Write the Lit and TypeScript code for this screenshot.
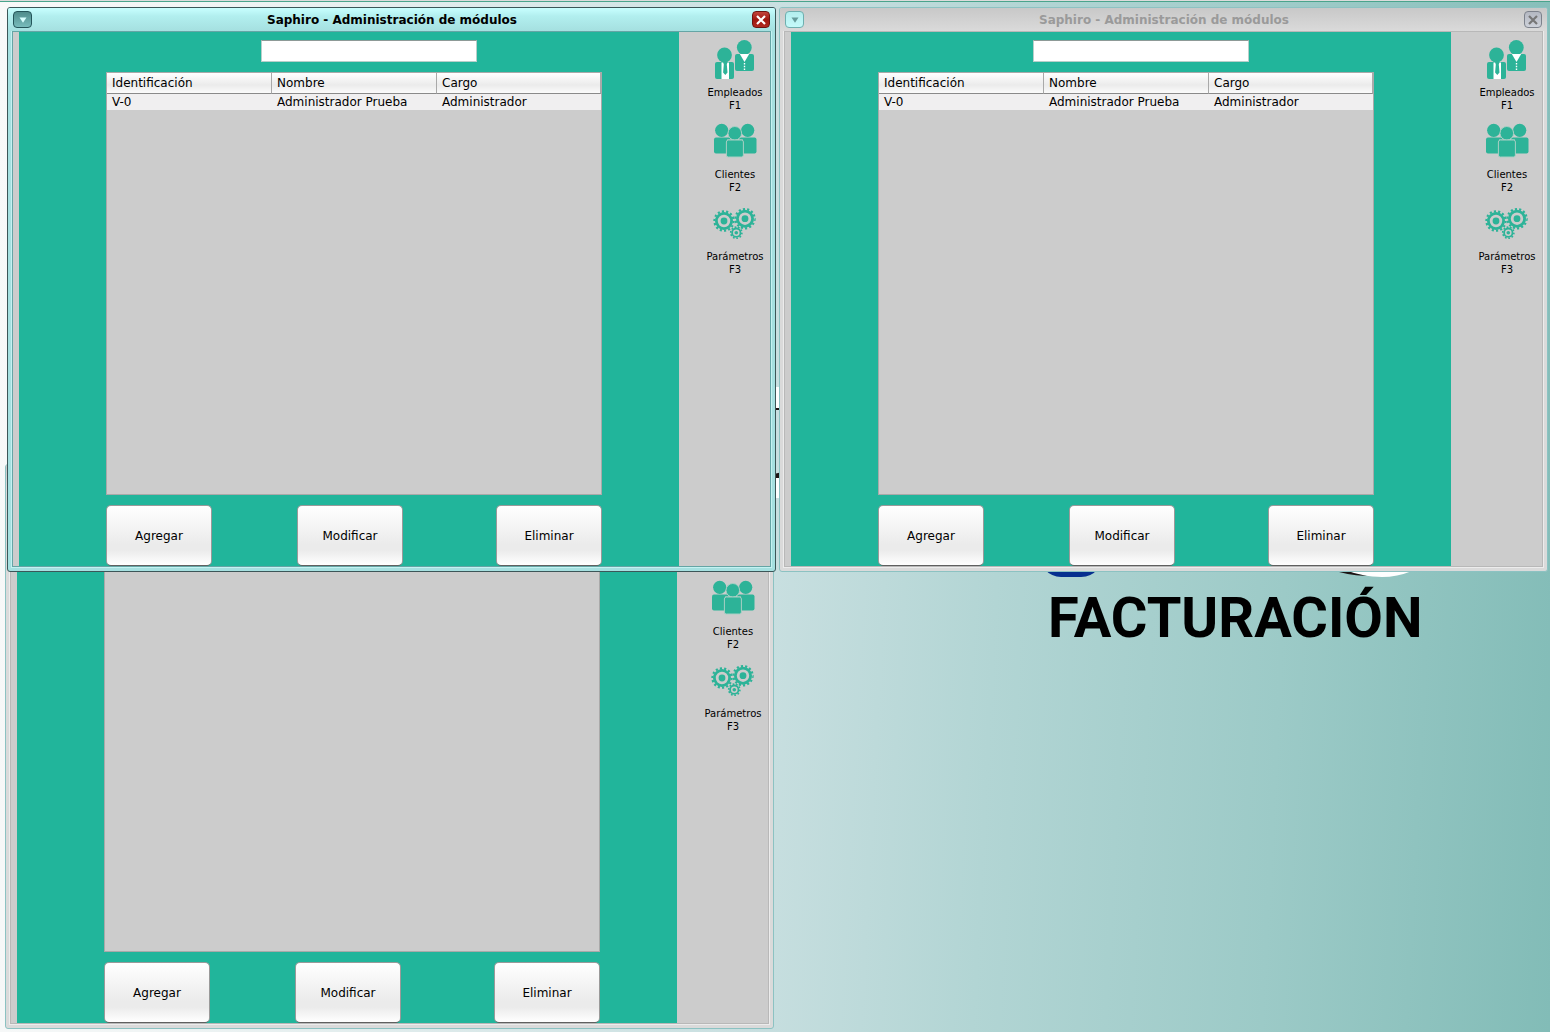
import { LitElement, html, css, svg, nothing } from "lit";
import { customElement, property } from "lit/decorators.js";
import { styleMap } from "lit/directives/style-map.js";

const bigGear = (cx: number, cy: number) => svg`
  <circle cx=${cx} cy=${cy} r="9.6" fill="none" stroke-width="2.2" pathLength="28" stroke-dasharray="1 1"></circle>
  <circle cx=${cx} cy=${cy} r="7.6" fill="none" stroke-width="2.8"></circle>
  <circle cx=${cx} cy=${cy} r="3.4" stroke="none"></circle>`;

const smallGear = (cx: number, cy: number) => svg`
  <circle cx=${cx} cy=${cy} r="5.6" fill="none" stroke-width="1.6" pathLength="20" stroke-dasharray="1 1"></circle>
  <circle cx=${cx} cy=${cy} r="4.2" fill="none" stroke-width="1.8"></circle>
  <circle cx=${cx} cy=${cy} r="1.8" stroke="none"></circle>`;

const employeesIcon = svg`
  <circle cx="12.5" cy="15" r="7.4"></circle>
  <circle cx="32.3" cy="7.4" r="7.4"></circle>
  <rect x="3" y="22" width="19" height="17" rx="2"></rect>
  <rect x="23" y="14" width="19" height="17" rx="2"></rect>
  <rect x="9.5" y="22.5" width="7.5" height="16.5" fill="#fff"></rect>
  <path d="M11 22h4.6l-.8 2.5.7 8-2.2 2.4-2.2-2.4.7-8z"></path>
  <path d="M27.8 14h9.4l-4.7 8z" fill="#fff"></path>
  <path d="M31.8 23h1.4v1.4h-1.4zm0 2.8h1.4v1.4h-1.4zm0 2.8h1.4V30h-1.4z" fill="#fff"></path>`;

const clientsIcon = svg`
  <circle cx="9.7" cy="8.3" r="6.6"></circle>
  <circle cx="35.7" cy="8.3" r="6.6"></circle>
  <rect x="2" y="15.5" width="17" height="16" rx="2"></rect>
  <rect x="27" y="15.5" width="17.5" height="16" rx="2"></rect>
  <path d="M15 17.5h16v2H15z" fill="#ccc"></path>
  <circle cx="22.8" cy="11.3" r="6.8" stroke="#a9cfc4" stroke-width="1"></circle>
  <rect x="14.4" y="18" width="17" height="17" rx="2" stroke="#a9cfc4" stroke-width="1"></rect>`;

const parametersIcon = svg`
  <g stroke="#2db398">${bigGear(12, 17)}${bigGear(33, 14.7)}${smallGear(24.3, 28.7)}</g>`;

const modules = [
  { label: "Empleados", key: "F1", icon: employeesIcon },
  { label: "Clientes", key: "F2", icon: clientsIcon },
  { label: "Parámetros", key: "F3", icon: parametersIcon },
];

interface Employee {
  id: string;
  name: string;
  role: string;
}

const employees: Employee[] = [{ id: "V-0", name: "Administrador Prueba", role: "Administrador" }];

@customElement("module-window")
export class ModuleWindow extends LitElement {
  @property({ type: Boolean, reflect: true }) active = false;
  @property({ attribute: false }) rows: Employee[] = [];

  static styles = css`
    :host {
      --edge: #8cc2c2;
      --frame: #dadada;
      --shine: #ececec;
      --inner: #b8b8b8;
      --bar: linear-gradient(#c8c8c8, #dadada);
      --title: #9a9a9a;
      display: flex;
      flex-direction: column;
      box-sizing: border-box;
      border: 1px solid var(--edge);
      border-radius: 3px;
      background: var(--frame);
      font: 12px/16px "DejaVu Sans", sans-serif;
      color: #000;
      overflow: hidden;
    }
    :host([active]) {
      --edge: #3c5658;
      --frame: #a5e0e0;
      --shine: #c4f2f2;
      --inner: #65a5a5;
      --bar: linear-gradient(#c8ffff, #b2efef 35%, #a5e0e0);
      --title: #000;
    }
    .titlebar {
      position: relative;
      display: flex;
      align-items: center;
      justify-content: space-between;
      height: 23px;
      padding: 0 5px;
      background: var(--bar);
    }
    .title {
      margin: 0;
      font-size: 12px;
      line-height: 16px;
      font-weight: bold;
      color: var(--title);
    }
    .control {
      width: 19px;
      height: 17px;
      padding: 0;
      display: grid;
      place-items: center;
      border: 1px solid #6eafaf;
      border-radius: 4px;
      background: linear-gradient(#b3eeee, #c4fafa);
      color: #669c9c;
    }
    .close {
      width: 18px;
      border-color: #7d828c;
      background: linear-gradient(#b4b8c2, #ced2da);
      color: #777;
    }
    :host([active]) .control {
      border-color: #24555a;
      background: linear-gradient(#4f8c8c, #78bcbc);
      color: #d8ffff;
    }
    :host([active]) .close {
      border-color: #6c1410;
      background: linear-gradient(#c2453c, #a01810 50%, #b02a20);
      color: #fff;
    }
    .body {
      flex: 1;
      display: flex;
      margin: 0 4px 4px;
      border: 1px solid var(--inner);
      outline: 1px solid var(--shine);
      padding-left: 6px;
      background: #ccc;
      min-height: 0;
    }
    .panel {
      flex: 1;
      display: flex;
      flex-direction: column;
      gap: 10px;
      padding: 8px 77px 0 87px;
      background: #21b59b;
    }
    .search {
      box-sizing: border-box;
      width: 216px;
      height: 22px;
      margin-left: 155px;
      padding: 0 4px;
      border: 1px solid #b8cfca;
      border-top-color: #8d9a97;
      background: #fff;
      font: inherit;
      outline: none;
    }
    .list {
      flex: 1;
      border: 1px solid #a9a9a9;
      background: #ccc;
    }
    table {
      width: 100%;
      border-collapse: separate;
      border-spacing: 0;
      table-layout: fixed;
    }
    .col {
      width: 165px;
    }
    th,
    td {
      padding: 0 5px;
      text-align: left;
      font-weight: normal;
      white-space: nowrap;
    }
    th {
      height: 20px;
      border-right: 1px solid #a9a9a9;
      border-bottom: 1px solid #8a8a8a;
      background: linear-gradient(#fff, #ebebeb 60%, #fbfbfb);
    }
    td {
      height: 16px;
      background: #f0eff0;
    }
    .actions {
      display: flex;
      justify-content: space-between;
    }
    .pair {
      display: flex;
      gap: 85px;
    }
    .action {
      width: 106px;
      height: 61px;
      padding: 0;
      border: 1px solid #9a9a9a;
      border-bottom-color: #606060;
      border-radius: 5px;
      background: linear-gradient(#fff, #ebebeb 65%, #ebebeb 75%, #fff);
      font: inherit;
      color: #000;
    }
    .modules {
      width: 70px;
      display: flex;
      flex-direction: column;
      gap: 10px;
      padding: 8px 0 0 21px;
    }
    .module {
      display: flex;
      flex-direction: column;
      align-items: center;
      padding: 0;
      border: 0;
      background: none;
      font: 10px/13px "DejaVu Sans", sans-serif;
      color: #000;
    }
    .icon {
      display: block;
      fill: #2db398;
    }
  `;

  render() {
    return html`
      <header class="titlebar">
        <button class="control" aria-label="Menú de la ventana">
          <svg width="8" height="6" fill="currentColor"><path d="M.5.5h7L4 5.8z"></path></svg>
        </button>
        <h2 class="title">Saphiro - Administración de módulos</h2>
        <button class="control close" aria-label="Cerrar">
          <svg width="10" height="10" stroke="currentColor" stroke-width="2.2"><path d="M1 1l8 8M9 1L1 9"></path></svg>
        </button>
      </header>
      <div class="body">
        <main class="panel">
          <input class="search" type="text" aria-label="Buscar" />
          <div class="list">${this.rows.length ? this.renderTable() : nothing}</div>
          <div class="actions">
            <div class="pair">
              <button class="action">Agregar</button>
              <button class="action">Modificar</button>
            </div>
            <button class="action">Eliminar</button>
          </div>
        </main>
        <nav class="modules">
          ${modules.map(
            (m) => html`<button class="module">
              <svg class="icon" width="46" height="46" viewBox="0 0 46 46">${m.icon}</svg>
              <span>${m.label}</span>
              <span>${m.key}</span>
            </button>`
          )}
        </nav>
      </div>
    `;
  }

  private renderTable() {
    return html`<table>
      <colgroup><col class="col" /><col class="col" /><col /></colgroup>
      <thead>
        <tr><th>Identificación</th><th>Nombre</th><th>Cargo</th></tr>
      </thead>
      <tbody>
        ${this.rows.map((e) => html`<tr><td>${e.id}</td><td>${e.name}</td><td>${e.role}</td></tr>`)}
      </tbody>
    </table>`;
  }
}

const windows = [
  { left: 5, top: 464, active: false, rows: [] as Employee[] },
  { left: 779, top: 7, active: false, rows: employees },
  { left: 7, top: 7, active: true, rows: employees },
];

@customElement("app-root")
export class AppRoot extends LitElement {
  static styles = css`
    :host {
      display: block;
      position: relative;
      height: 100vh;
      box-sizing: border-box;
      overflow: hidden;
      border-top: 1px solid #dcdcdc;
      background: linear-gradient(93deg, #f8f9f9, #f1f5f5 12%, #c8dfe0 50%, #b2d5d4 64%, #9ccac7 82%, #82bcb7);
    }
    .rule {
      height: 1px;
      background: #4aa48c;
    }
    .desktop {
      position: absolute;
      inset: -1px 0 0;
    }
    .art,
    .brand,
    .window {
      position: absolute;
    }
    .art {
      left: 0;
      top: 0;
    }
    .brand {
      left: 1048px;
      top: 586px;
      margin: 0;
      font: bold 56px/64px Roboto, sans-serif;
      color: #000;
    }
    .window {
      width: 769px;
      height: 565px;
    }
  `;

  render() {
    return html`
      <div class="rule"></div>
      <div class="desktop">
        <svg class="art" width="1550" height="600" aria-hidden="true">
          <path d="M770 387h12v21h-12zM770 478h12v20h-12z" fill="#fff"></path>
          <path d="M770 408h12v2h-12zM770 475l12-3v6h-12z" fill="#1c1414"></path>
          <path d="M1044 569q8 8 17 8h20q10 0 17-8z" fill="#062f8f"></path>
          <path d="M1330 568q35 9 52 9 15 0 30-6v-3z" fill="#fff"></path>
          <path d="M1325 568q20 7 42 8-15-3-28-8z" fill="#1c1414"></path>
        </svg>
        <h1 class="brand">FACTURACIÓN</h1>
        ${windows.map(
          (w) => html`<module-window
            class="window"
            ?active=${w.active}
            .rows=${w.rows}
            style=${styleMap({ left: `${w.left}px`, top: `${w.top}px` })}
          ></module-window>`
        )}
      </div>
    `;
  }
}
